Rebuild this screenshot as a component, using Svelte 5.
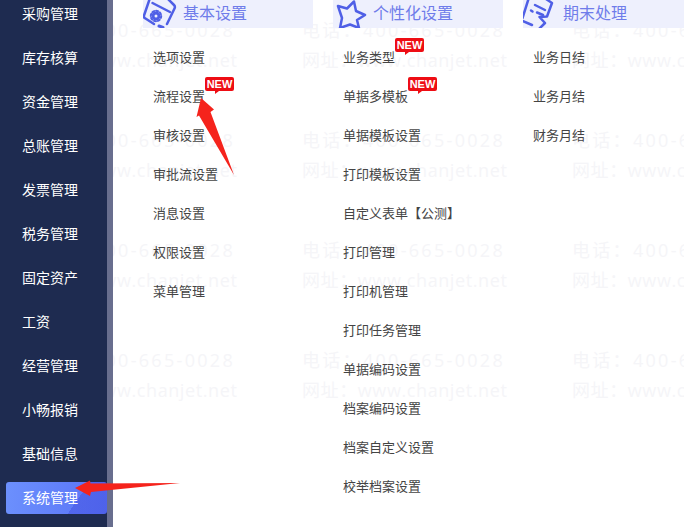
<script lang="ts">
  const nav = [`采购管理`, `库存核算`, `资金管理`, `总账管理`, `发票管理`, `税务管理`, `固定资产`, `工资`, `经营管理`, `小畅报销`, `基础信息`, `系统管理`]
  const active = `系统管理`
  const columns = [
    {
      title: `基本设置`,
      icon: `gear`,
      items: [`选项设置`, `流程设置`, `审核设置`, `审批流设置`, `消息设置`, `权限设置`, `菜单管理`],
      fresh: [`流程设置`],
    },
    {
      title: `个性化设置`,
      icon: `star`,
      items: [`业务类型`, `单据多模板`, `单据模板设置`, `打印模板设置`, `自定义表单【公测】`, `打印管理`, `打印机管理`, `打印任务管理`, `单据编码设置`, `档案编码设置`, `档案自定义设置`, `校举档案设置`],
      fresh: [`业务类型`, `单据多模板`],
    },
    {
      title: `期末处理`,
      icon: `doc`,
      items: [`业务日结`, `业务月结`, `财务月结`],
      fresh: [],
    },
  ]
  const tiles = Array.from({ length: 15 })
</script>

<div class="page">
  <aside class="sidebar">
    <ul>
      {#each nav as name}
        <li class:active={name === active}><span>{name}</span></li>
      {/each}
    </ul>
  </aside>
  <div class="rail"></div>

  <main class="content">
    <div class="watermark" aria-hidden="true">
      {#each tiles as _}
        <div class="tile">
          <div class="phone">电话：400-665-0028</div>
          <div class="site">网址：www.chanjet.net</div>
        </div>
      {/each}
    </div>

    {#each columns as col}
      <section class="column">
        <header>
          <svg viewBox="0 0 34 28" width="34" height="28" fill="none" stroke="#4f5fe6" stroke-width="2.5" stroke-linejoin="round" stroke-linecap="round">
            {#if col.icon === `gear`}
              <path d="M7 -2L1 15.500Q.5 17.500 2.500 18.500L11 24M24 -2L31 5Q32.500 6.500 31.500 8.500L24 24" />
              <path d="M9.500 3L27 12" />
              <circle cx="13" cy="16" r="3" stroke-width="3" />
              <circle cx="13" cy="16" r="5.200" stroke-width="2" stroke-dasharray="2 2" />
              <path d="M16 26L20 27.500" stroke-width="3" />
            {:else if col.icon === `star`}
              <path d="M5 6L14 8.500 21 1.500 23 11 32 15 24 20 26 28 17 24.500 7 28 9 18Z" />
            {:else}
              <path d="M5.500 -1L-.5 18M-.5 21L9 25" />
              <path d="M23 -1L29 3 24 16.500 16.500 17 22 23 15 30" />
              <path d="M12 5L22 10M8 10.500L9.500 11.500M14 12.500L20 15" />
            {/if}
          </svg>
          <h2>{col.title}</h2>
        </header>
        <ul>
          {#each col.items as item}
            <li>
              <span class="label">{item}{#if col.fresh.includes(item)}<b class="badge">NEW</b>{/if}</span>
            </li>
          {/each}
        </ul>
      </section>
    {/each}
  </main>

  <svg class="arrows" viewBox="0 0 684 527" width="684" height="527" aria-hidden="true">
    <path d="M201 98L214 109.500 210.500 112 234 175 199 115.500 196.500 117Z" fill="#f5231c" />
    <path d="M75 488L90 480.500 90.500 483.500 180 483 91 492 90 496Z" fill="#f5231c" />
  </svg>
</div>

<style>
  :global(body) {
    margin: 0;
    overflow: hidden;
    background: #fff;
  }
  .page {
    position: relative;
    display: flex;
    width: 684px;
    height: 527px;
    overflow: hidden;
    font-family: "Noto Sans CJK SC", "Noto Sans", sans-serif;
  }
  ul {
    list-style: none;
    margin: 0;
    padding: 0;
  }
  .sidebar {
    position: relative;
    z-index: 1;
    flex: none;
    width: 107px;
    background: #1e2b50;
  }
  .sidebar ul {
    margin-top: -8px;
    padding-left: 6px;
  }
  .sidebar li {
    display: flex;
    align-items: center;
    box-sizing: border-box;
    height: 44px;
    padding: 0 0 2px 16px;
    color: #fff;
    font-size: 14px;
  }
  .sidebar li.active {
    position: relative;
  }
  .sidebar li.active::before {
    content: "";
    position: absolute;
    inset: 6px 0;
    border-radius: 3px;
    background:
      linear-gradient(125deg, transparent 68%, rgba(70, 85, 225, 0.55) 68%),
      linear-gradient(95deg, #6c90fd, #5872f6);
  }
  .sidebar li.active span {
    position: relative;
  }
  .rail {
    position: relative;
    z-index: 1;
    flex: none;
    width: 6px;
    background: #686e8e;
  }
  .content {
    position: relative;
    flex: 1;
    display: flex;
    gap: 20px;
    padding-left: 30px;
    min-width: 0;
  }
  .watermark {
    position: absolute;
    top: -95px;
    left: -81px;
    display: grid;
    grid-template-columns: repeat(3, 270px);
    grid-auto-rows: 110px;
    color: #f5f5f8;
    font-size: 18px;
    line-height: 30px;
    white-space: nowrap;
  }
  .tile div {
    font-family: "Open Sans", "Noto Sans CJK SC", sans-serif;
  }
  .phone {
    letter-spacing: 2.3px;
  }
  .site {
    letter-spacing: 0.6px;
  }
  .column {
    position: relative;
    flex: none;
    width: 170px;
  }
  header {
    display: flex;
    align-items: center;
    gap: 6px;
    height: 28px;
    background: #eef0fd;
    overflow: hidden;
  }
  header svg {
    flex: none;
    overflow: visible;
  }
  h2 {
    margin: 0 0 4px;
    color: #6f7cea;
    font-size: 16px;
    font-weight: 400;
    white-space: nowrap;
  }
  .column ul {
    padding: 10px 0 0 10px;
  }
  .column li {
    display: flex;
    align-items: center;
    box-sizing: border-box;
    height: 39px;
    padding-bottom: 2px;
    color: #444;
    font-size: 13px;
    white-space: nowrap;
  }
  .label {
    position: relative;
  }
  .badge {
    position: absolute;
    left: 100%;
    top: -9px;
    width: 29px;
    height: 14px;
    border-radius: 2px;
    background: #ee0d14;
    color: #fff;
    font: 700 11px/14px "Liberation Sans", sans-serif;
    text-align: center;
  }
  .badge::after {
    content: "";
    position: absolute;
    left: 10px;
    top: 14px;
    border-style: solid;
    border-width: 3px 4px 0 0;
    border-color: #ee0d14 transparent transparent transparent;
  }
  .arrows {
    position: absolute;
    inset: 0;
    z-index: 2;
    pointer-events: none;
  }
</style>
